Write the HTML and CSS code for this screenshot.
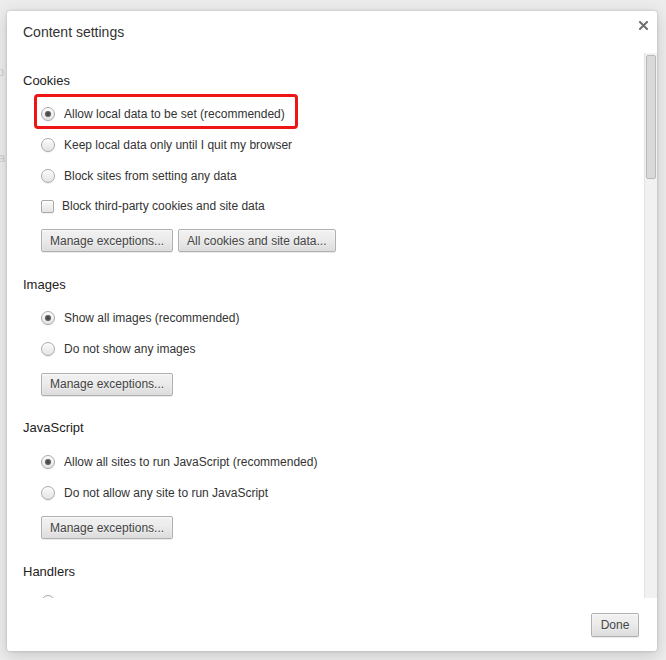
FILE: index.html
```html
<!DOCTYPE html>
<html lang="en">
<head>
<meta charset="utf-8">
<title>Content settings</title>
<link rel="stylesheet" href="styles.css">
</head>
<body>
<div class="backdrop">
  <span class="frag frag-1">o</span>
  <span class="frag frag-2">a</span>
</div>
<div class="dialog">
  <div class="header">
    <h1 class="title">Content settings</h1>
    <button class="close" aria-label="Close">
      <svg width="9" height="9" viewBox="0 0 9 9"><path d="M1 1 L8 8 M8 1 L1 8" stroke="#6f6f6f" stroke-width="2" stroke-linecap="square" fill="none"/></svg>
    </button>
  </div>
  <div class="body">
    <div class="scroll">
      <section class="section">
        <h3 class="heading">Cookies</h3>
        <div class="options">
          <label class="row highlighted"><span class="radio checked"></span><span class="label">Allow local data to be set (recommended)</span></label>
          <label class="row"><span class="radio"></span><span class="label">Keep local data only until I quit my browser</span></label>
          <label class="row"><span class="radio"></span><span class="label">Block sites from setting any data</span></label>
          <label class="row row-check"><span class="checkbox"></span><span class="label">Block third-party cookies and site data</span></label>
        </div>
        <div class="buttons">
          <button class="btn">Manage exceptions...</button>
          <button class="btn">All cookies and site data...</button>
        </div>
      </section>
      <section class="section">
        <h3 class="heading">Images</h3>
        <div class="options">
          <label class="row"><span class="radio checked"></span><span class="label">Show all images (recommended)</span></label>
          <label class="row"><span class="radio"></span><span class="label">Do not show any images</span></label>
        </div>
        <div class="buttons">
          <button class="btn">Manage exceptions...</button>
        </div>
      </section>
      <section class="section">
        <h3 class="heading">JavaScript</h3>
        <div class="options">
          <label class="row"><span class="radio checked"></span><span class="label">Allow all sites to run JavaScript (recommended)</span></label>
          <label class="row"><span class="radio"></span><span class="label">Do not allow any site to run JavaScript</span></label>
        </div>
        <div class="buttons">
          <button class="btn">Manage exceptions...</button>
        </div>
      </section>
      <section class="section">
        <h3 class="heading">Handlers</h3>
        <div class="options options-handlers">
          <div class="row"><span class="radio checked"></span></div>
        </div>
      </section>
    </div>
    <div class="scrollbar"><div class="thumb"></div></div>
  </div>
  <div class="footer">
    <button class="btn btn-done">Done</button>
  </div>
</div>
</body>
</html>
```
FILE: styles.css
```css
html, body {
  margin: 0;
  padding: 0;
}
body {
  background: #ececec;
  font-family: "Liberation Sans", Arial, sans-serif;
  width: 666px;
  height: 660px;
  overflow: hidden;
  position: relative;
}
.backdrop {
  position: absolute;
  left: 0;
  top: 0;
  width: 7px;
  height: 660px;
  overflow: hidden;
}
.frag {
  position: absolute;
  font-size: 13px;
  color: #cfcfcf;
}
.frag-1 { left: -3px; top: 64px; }
.frag-2 { left: -2px; top: 150px; }

.dialog {
  position: relative;
  margin: 11px 0 0 7px;
  width: 650px;
  height: 640px;
  background: #fff;
  border-radius: 3px;
  box-shadow: 0 0 3px rgba(0,0,0,0.18), 0 4px 16px rgba(0,0,0,0.16);
  display: flex;
  flex-direction: column;
  overflow: hidden;
}
.header {
  height: 42px;
  box-sizing: border-box;
  padding: 12px 0 0 16px;
  display: flex;
  align-items: flex-start;
  flex: none;
}
.title {
  margin: 0;
  font-size: 14px;
  line-height: 18px;
  font-weight: normal;
  color: #333;
}
.close {
  margin: -2px 9px 0 auto;
  padding: 0;
  border: 0;
  background: none;
  width: 9px;
  height: 9px;
  display: block;
}
.close svg { display: block; }

.body {
  height: 545px;
  display: flex;
  flex: none;
}
.scroll {
  flex: 1;
  overflow: hidden;
  padding: 19px 0 0 16px;
}
.scrollbar {
  width: 12px;
  border-left: 1px solid #e2e2e2;
  background: #f1f1f1;
  flex: none;
}
.thumb {
  margin: 2px 0 0 1px;
  width: 8px;
  height: 122px;
  background: #d9d9d9;
  border: 1px solid #b9b9b9;
  border-radius: 2px;
}

.section + .section {
  margin-top: 23.5px;
}
.section + .section .options {
  margin-top: 9px;
}
.section + .section .options-handlers {
  margin-top: 6px;
}
.section + .section .buttons {
  margin-top: 8px;
}
.heading {
  margin: 0;
  font-size: 13px;
  line-height: 18px;
  font-weight: normal;
  color: #222;
}
.options {
  margin-top: 8px;
  padding-left: 18px;
}
.row {
  display: flex;
  align-items: center;
  height: 31px;
  width: fit-content;
  position: relative;
  font-size: 12px;
  color: #333;
  white-space: nowrap;
}
.row-check {
  height: 30px;
}
.highlighted::after {
  content: "";
  position: absolute;
  top: -4px;
  bottom: 0;
  left: -7px;
  right: -13px;
  border: 3px solid #ee1515;
  border-radius: 4px;
}
.radio {
  width: 14px;
  height: 14px;
  box-sizing: border-box;
  border-radius: 50%;
  border: 1px solid #a9a9a9;
  background: linear-gradient(#fbfbfb, #f1f1f1 40%, #e3e3e3);
  box-shadow: 0 1px 0 rgba(0,0,0,0.06), inset 0 1px 2px rgba(255,255,255,0.8);
  margin-right: 9px;
  position: relative;
  flex: none;
}
.radio.checked::after {
  content: "";
  position: absolute;
  left: 3px;
  top: 3px;
  width: 6px;
  height: 6px;
  border-radius: 50%;
  background: radial-gradient(#444, #5a5a5a 60%, #777);
}
.checkbox {
  width: 13px;
  height: 13px;
  box-sizing: border-box;
  border-radius: 2px;
  border: 1px solid #a9a9a9;
  background: linear-gradient(#fbfbfb, #f1f1f1 40%, #e3e3e3);
  box-shadow: 0 1px 0 rgba(0,0,0,0.06), inset 0 1px 2px rgba(255,255,255,0.8);
  margin-right: 8px;
  flex: none;
}
.buttons {
  margin-top: 8px;
  padding-left: 18px;
  display: flex;
  gap: 5px;
}
.btn {
  height: 23px;
  padding: 0 8px;
  border: 1px solid #b0b0b0;
  border-radius: 2px;
  background: linear-gradient(#f0f0f0, #ededed 38%, #dcdcdc);
  box-shadow: 0 1px 0 rgba(0,0,0,0.08), inset 0 1px 2px rgba(255,255,255,0.75);
  color: #444;
  font-family: "Liberation Sans", Arial, sans-serif;
  font-size: 12px;
  text-shadow: 0 1px 0 #f0f0f0;
  white-space: nowrap;
}
.footer {
  flex: 1;
  display: flex;
  justify-content: flex-end;
  align-items: flex-start;
  padding: 15px 18px 0 0;
}
.btn-done {
  height: 24px;
  min-width: 48px;
}
```
